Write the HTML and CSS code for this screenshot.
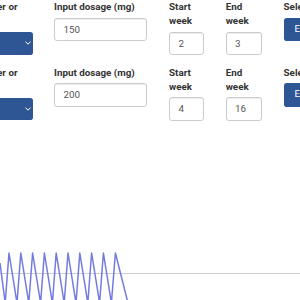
FILE: index.html
```html
<!DOCTYPE html>
<html>
<head>
<meta charset="utf-8">
<link rel="stylesheet" href="styles.css">
</head>
<body>
<div class="form">
  <div class="row">
    <div class="col col-type">
      <label class="lbl"><span class="l1">Select injectable, patch, gel, other or</span><span class="l2">tablet:</span></label>
      <div class="select"><svg class="chev" width="6" height="4" viewBox="0 0 6 4"><path d="M0.5 0.6 L3 3.2 L5.5 0.6" fill="none" stroke="#fff" stroke-width="1"/></svg></div>
    </div>
    <div class="col col-dose">
      <label class="lbl">Input dosage (mg)</label>
      <div class="input">150</div>
    </div>
    <div class="col col-start">
      <label class="lbl">Start week</label>
      <div class="input">2</div>
    </div>
    <div class="col col-end">
      <label class="lbl">End week</label>
      <div class="input">3</div>
    </div>
    <div class="col col-act">
      <label class="lbl nowrap">Select action</label>
      <div class="btn">Enter</div>
    </div>
  </div>
  <div class="row">
    <div class="col col-type">
      <label class="lbl"><span class="l1">Select injectable, patch, gel, other or</span><span class="l2">tablet:</span></label>
      <div class="select"><svg class="chev" width="6" height="4" viewBox="0 0 6 4"><path d="M0.5 0.6 L3 3.2 L5.5 0.6" fill="none" stroke="#fff" stroke-width="1"/></svg></div>
    </div>
    <div class="col col-dose">
      <label class="lbl">Input dosage (mg)</label>
      <div class="input">200</div>
    </div>
    <div class="col col-start">
      <label class="lbl">Start week</label>
      <div class="input">4</div>
    </div>
    <div class="col col-end">
      <label class="lbl">End week</label>
      <div class="input">16</div>
    </div>
    <div class="col col-act">
      <label class="lbl nowrap">Select action</label>
      <div class="btn">Enter</div>
    </div>
  </div>
</div>
<svg class="chart" width="300" height="160" viewBox="0 140 300 160">
  <line x1="0" y1="273.5" x2="300" y2="273.5" stroke="#cfcfcf" stroke-width="1.2"/>
  <polyline fill="none" stroke="#747be0" stroke-width="1.5" stroke-linejoin="round"
    points="0,263 5.2,303 9,253 17,303 20.8,253 28.8,303 32.6,253 40.6,303 44.4,253 52.4,303 56.2,253 64.2,303 68,253 76,303 79.8,253 87.8,303 91.6,253 99.6,303 103.4,253 111.4,303 115.4,253 128.5,305"/>
</svg>
</body>
</html>
```

FILE: styles.css
```css
html, body {
  margin: 0;
  padding: 0;
  background: #fff;
}
body {
  width: 300px;
  height: 300px;
  overflow: hidden;
  font-family: Roboto, "Liberation Sans", sans-serif;
  font-size: 9.8px;
  line-height: 14px;
  color: #333;
}
.form {
  height: 140px;
  overflow: hidden;
}
.row {
  display: flex;
  align-items: flex-start;
  gap: 21.6px;
  margin-bottom: 10.5px;
}
.col {
  flex: none;
  display: flex;
  flex-direction: column;
}
.col-type {
  width: 230px;
  margin-left: -197.5px;
}
.col-dose { width: 93.4px; }
.col-start { width: 35px; }
.col-end { width: 36.3px; }
.col-act { width: 80px; }
.lbl {
  display: block;
  font-weight: 700;
  margin-bottom: 3.5px;
}
.nowrap { white-space: nowrap; }
.l1 {
  display: block;
  white-space: nowrap;
  text-align: right;
  padding-right: 15px;
}
.l2 {
  display: block;
}
.input {
  box-sizing: border-box;
  height: 23.8px;
  padding: 4.2px 8.4px;
  border: 1px solid #ccc;
  border-radius: 2.8px;
  box-shadow: inset 0 1px 1px rgba(0,0,0,0.075);
  color: #555;
  line-height: 14px;
}
.select {
  box-sizing: border-box;
  height: 22.5px;
  margin-top: 0.7px;
  background: #2e5594;
  border-radius: 2.8px;
  display: flex;
  justify-content: flex-end;
  align-items: center;
  padding-right: 2px;
}
.chev { display: block; }
.btn {
  box-sizing: border-box;
  height: 23.4px;
  background: #2e5594;
  border-radius: 2.8px;
  color: #fff;
  padding: 4.2px 8.4px 4.2px 11px;
  line-height: 14px;
}
.chart {
  display: block;
}
```
